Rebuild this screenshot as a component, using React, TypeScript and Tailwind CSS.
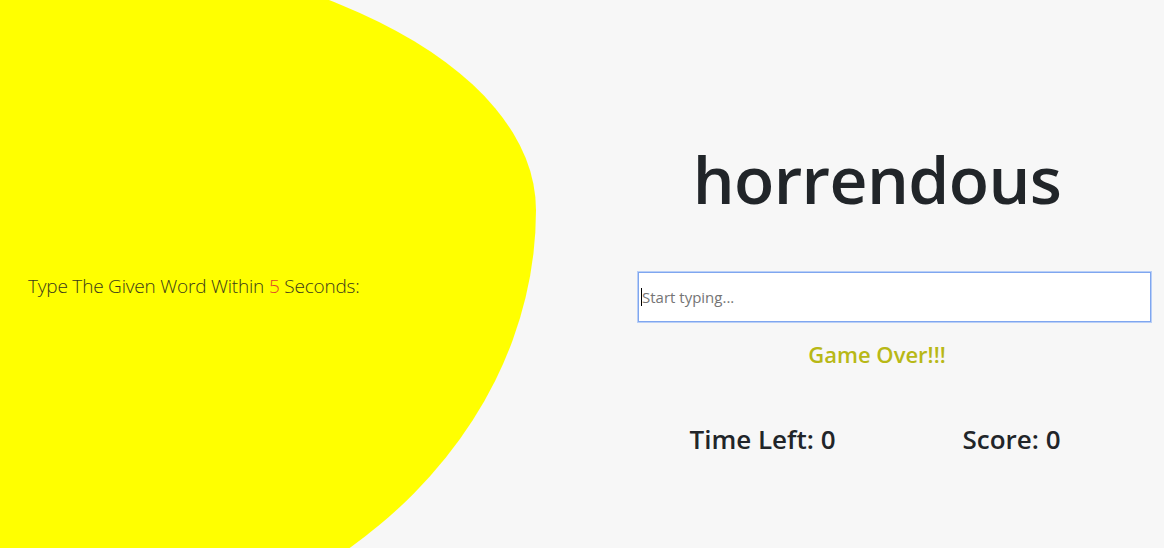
import React from "react";

export default function App() {
  return (
    <div
      className="relative w-[1164px] h-[548px] overflow-hidden bg-[#f7f7f7]"
      style={{ fontFamily: '"Open Sans", "Noto Sans", sans-serif' }}
    >
      <div className="absolute left-0 top-[-56px] w-[536px] h-[712px] bg-[#ffff00] rounded-tr-[536px_266px] rounded-br-[536px_446px]" />
      <div className="relative flex h-full">
        <div className="w-[590px] flex items-center pl-[28px]">
          <p className="text-[19px] font-light text-[#3a3a1a] mt-[25px] tracking-[-0.2px]">
            Type The Given Word Within <span className="text-[#e0452a]">5</span> Seconds:
          </p>
        </div>
        <div className="flex-1 flex flex-col">
          <h1 className="mt-[128px] text-center text-[66px] leading-[100px] font-semibold text-[#212529] tracking-[-0.6px]">
            horrendous
          </h1>
          <div className="mt-[44px] ml-[48px] w-[513px] h-[50px] bg-white border border-[#7fa6ef] ring-1 ring-[#b9cff7] flex items-center">
            <span className="w-px h-[18px] bg-black ml-[2px]" />
            <input
              className="flex-1 h-full outline-none bg-transparent text-[15px] text-[#333] placeholder:text-[#757575]"
              placeholder="Start typing..."
            />
          </div>
          <div className="mt-[17px] text-center text-[22px] font-semibold text-[#b8b816] leading-[30px]">
            Game Over!!!
          </div>
          <div className="mt-[53px] ml-[48px] w-[498px] grid grid-cols-2 text-center text-[26px] font-semibold text-[#212529] leading-[34px]">
            <div>Time Left: 0</div>
            <div>Score: 0</div>
          </div>
        </div>
      </div>
    </div>
  );
}
